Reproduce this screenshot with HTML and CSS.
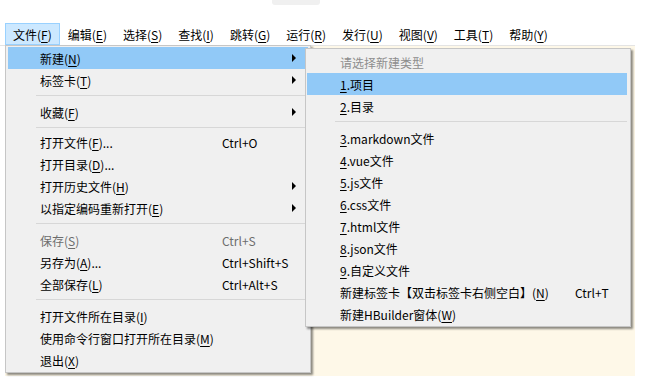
FILE: index.html
```html
<!DOCTYPE html>
<html lang="zh-CN">
<head>
  <meta charset="UTF-8" />
  <title>HBuilder - 文件菜单</title>
  <link rel="stylesheet" href="styles.css">
</head>
<body>

  <div class="title-strip">
    <span class="tab-stub"></span>
  </div>

  <div class="menubar">
    <span class="bar-item active">文件(<u>F</u>)</span>
    <span class="bar-item">编辑(<u>E</u>)</span>
    <span class="bar-item">选择(<u>S</u>)</span>
    <span class="bar-item">查找(<u>I</u>)</span>
    <span class="bar-item">跳转(<u>G</u>)</span>
    <span class="bar-item">运行(<u>R</u>)</span>
    <span class="bar-item">发行(<u>U</u>)</span>
    <span class="bar-item">视图(<u>V</u>)</span>
    <span class="bar-item">工具(<u>T</u>)</span>
    <span class="bar-item">帮助(<u>Y</u>)</span>
  </div>

  <div class="workspace">
    <div class="editor"></div>

    <!-- 文件菜单 -->
    <div class="menu file-menu">
      <div class="row selected"><span class="label">新建(<u>N</u>)</span><span class="arrow"></span></div>
      <div class="row"><span class="label">标签卡(<u>T</u>)</span><span class="arrow"></span></div>
      <div class="sep"></div>
      <div class="row"><span class="label">收藏(<u>F</u>)</span><span class="arrow"></span></div>
      <div class="sep tight"></div>
      <div class="row"><span class="label">打开文件(<u>F</u>)...</span><span class="key">Ctrl+O</span></div>
      <div class="row"><span class="label">打开目录(<u>D</u>)...</span></div>
      <div class="row"><span class="label">打开历史文件(<u>H</u>)</span><span class="arrow"></span></div>
      <div class="row"><span class="label">以指定编码重新打开(<u>E</u>)</span><span class="arrow"></span></div>
      <div class="sep"></div>
      <div class="row disabled"><span class="label">保存(<u>S</u>)</span><span class="key">Ctrl+S</span></div>
      <div class="row"><span class="label">另存为(<u>A</u>)...</span><span class="key">Ctrl+Shift+S</span></div>
      <div class="row"><span class="label">全部保存(<u>L</u>)</span><span class="key">Ctrl+Alt+S</span></div>
      <div class="sep"></div>
      <div class="row"><span class="label">打开文件所在目录(<u>I</u>)</span></div>
      <div class="row"><span class="label">使用命令行窗口打开所在目录(<u>M</u>)</span></div>
      <div class="row"><span class="label">退出(<u>X</u>)</span></div>
    </div>

    <!-- 新建子菜单 -->
    <div class="menu sub-menu">
      <div class="row caption"><span class="label">请选择新建类型</span></div>
      <div class="row selected"><span class="label"><u>1</u>.项目</span></div>
      <div class="row"><span class="label"><u>2</u>.目录</span></div>
      <div class="sep"></div>
      <div class="row"><span class="label"><u>3</u>.markdown文件</span></div>
      <div class="row"><span class="label"><u>4</u>.vue文件</span></div>
      <div class="row"><span class="label"><u>5</u>.js文件</span></div>
      <div class="row"><span class="label"><u>6</u>.css文件</span></div>
      <div class="row"><span class="label"><u>7</u>.html文件</span></div>
      <div class="row"><span class="label"><u>8</u>.json文件</span></div>
      <div class="row"><span class="label"><u>9</u>.自定义文件</span></div>
      <div class="row"><span class="label">新建标签卡【双击标签卡右侧空白】(<u>N</u>)</span><span class="key">Ctrl+T</span></div>
      <div class="row"><span class="label">新建HBuilder窗体(<u>W</u>)</span></div>
    </div>
  </div>

</body>
</html>
```

FILE: styles.css
```css
/* Page */
body {
  margin: 0;
  padding: 0;
  width: 663px;
  height: 385px;
  overflow: hidden;
  background: #ffffff;
  font-family: "Noto Sans CJK SC", "Microsoft YaHei", sans-serif;
  font-size: 12px;
  color: #000;
}

u {
  text-decoration: underline;
  text-underline-offset: 2px;
}

.title-strip {
  height: 24px;
  position: relative;
}

.tab-stub {
  display: block;
  width: 48px;
  height: 6px;
  margin-left: 272px;
  margin-top: -1px;
  background: #f0f0f0;
  border-radius: 0 0 3px 3px;
}

/* Menu bar */
.menubar {
  display: flex;
  width: 630px;
  height: 22px;
  padding-left: 5px;
  border-bottom: 1px solid #e4e4e4;
}

.bar-item {
  display: flex;
  align-items: center;
  padding: 0 7px;
  border: 1px solid transparent;
  box-sizing: border-box;
  height: 22px;
  white-space: nowrap;
}

.bar-item.active {
  background: #cce8ff;
  border-color: #99d1ff;
}

/* Editor area under the menus */
.workspace {
  position: relative;
  height: 338px;
}

.editor {
  margin-left: 5px;
  width: 630px;
  height: 330px;
  background: #fef8e8;
}

/* Dropdown menus */
.menu {
  position: absolute;
  background: #f0f0f0;
  border: 1px solid #c6c6c6;
  box-shadow: 2px 2px 2px rgba(0, 0, 0, 0.45);
}

.file-menu {
  left: 5px;
  top: -1px;
  width: 300px;
  padding: 1px 2px 1px 2px;
}

.sub-menu {
  left: 305px;
  top: 2px;
  width: 320px;
  padding: 2px 3px 1px 1px;
}

.row {
  display: flex;
  align-items: center;
  height: 22px;
  padding-left: 32px;
  padding-right: 12px;
  white-space: nowrap;
}

.sub-menu .row {
  padding-left: 33px;
}

.row.selected {
  background: #91c9f7;
}

.row .label {
  flex: 0 0 182px;
}

.sub-menu .row .label {
  flex-basis: 235px;
}

.row.disabled {
  color: #6d6d6d;
}

.row.caption {
  color: #8d8d8d;
}

.arrow {
  margin-left: auto;
  width: 0;
  height: 0;
  border-top: 4px solid transparent;
  border-bottom: 4px solid transparent;
  border-left: 4px solid #000;
}

.sep {
  height: 1px;
  margin: 4px 0 5px 28px;
  background: #d7d7d7;
}

.sep.tight {
  margin-bottom: 3px;
}
```
